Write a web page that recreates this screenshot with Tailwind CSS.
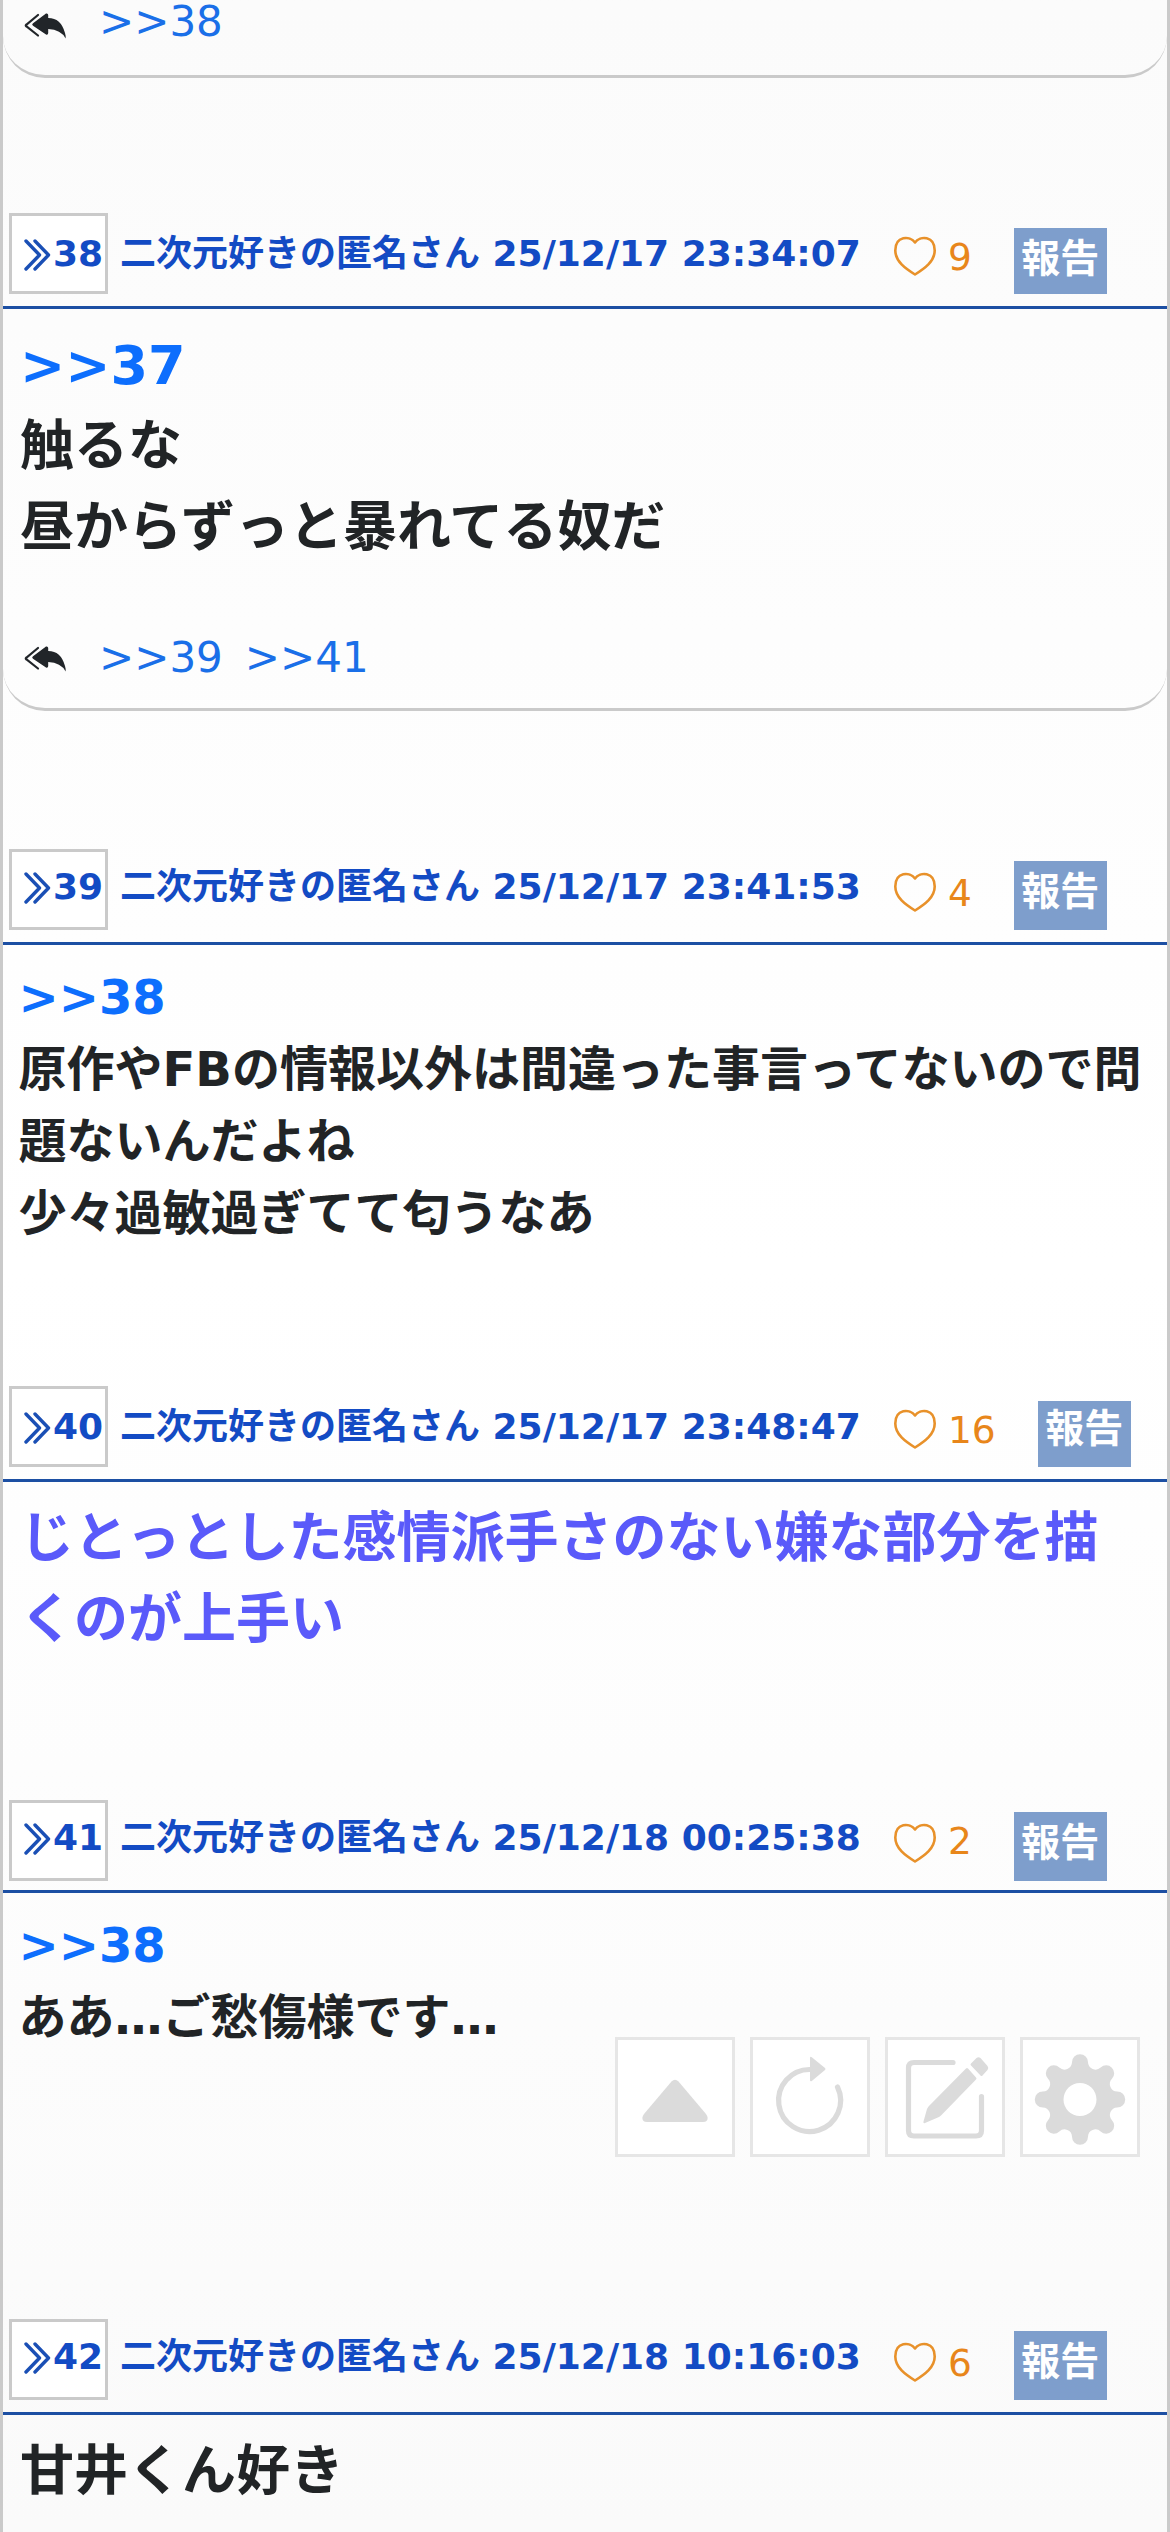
<!DOCTYPE html>
<html lang="ja">
<head>
<meta charset="utf-8">
<title>Thread</title>
<script src="https://cdn.jsdelivr.net/npm/@tailwindcss/browser@4"></script>
</head>
<body class="w-[1170px] h-[2532px] overflow-hidden relative font-['DejaVu_Sans','Noto_Sans_CJK_JP',sans-serif] text-[#212426]">
<svg class="hidden">
  <symbol id="replyall" viewBox="0 0 42 26"><path d="M14 2 2.5 11.5Q1 12.5 2.500 13.500L14 22.500" fill="none" stroke="#212529" stroke-width="2.2" stroke-linecap="round"/><path d="M9 10.200 22 .6Q24 0 24.200 2V5Q37 5 41 20Q42 23 41.600 25.500Q37 16.500 24.200 16V20Q24 22.200 22 21.500L9 12.800Q7.300 11.500 9 10.200Z" fill="#212529"/></symbol>
  <symbol id="chev" viewBox="0 0 27 32"><path d="M2 2 15.500 16 2 30M11 2 24.500 16 11 30" fill="none" stroke="#1a4fb5" stroke-width="3.400" stroke-linecap="round" stroke-linejoin="round"/></symbol>
  <symbol id="heart" viewBox="0 0 42 40"><path d="M21 6.500C16-.5 1.300-.5 1.300 14.500C1.300 25.500 11.500 32.500 21 38.500C30.500 32.500 40.700 25.500 40.700 14.500C40.700-.5 26-.5 21 6.500Z" fill="none" stroke="#e8912a" stroke-width="2.600" stroke-linejoin="round"/></symbol>
</svg>
<main class="h-full flex flex-col border-x-3 border-[#cacaca] bg-linear-to-b from-[#fbfbfb] via-white to-[#fafafa]">
  <div class="h-[78px] shrink-0 border-b-3 border-[#cacaca] rounded-b-[42px] flex items-start pl-[21px] text-[42px] leading-[63px] text-[#1a6fe8]">
    <svg class="w-[42px] h-[26px] mt-[13px]"><use href="#replyall"/></svg><span class="ml-[33px] -mt-[10px]">&gt;&gt;38</span>
  </div>

  <header class="h-[231px] shrink-0 border-b-3 border-[#1c4fa3] flex items-start pt-[135px] pl-[6px]">
    <div class="w-[99px] h-[81px] border-3 border-[#cacaca] bg-white flex pl-[12px] text-[#134bc4] font-bold text-[36px] leading-[54px]"><svg class="w-[27px] h-[32px] mt-[23px]"><use href="#chev"/></svg><span class="mt-[11px] ml-[2px]">38</span></div>
    <div class="ml-[12px] mt-[14px] w-[768px] whitespace-nowrap text-[#134bc4] font-bold text-[36px] leading-[54px]">二次元好きの匿名さん 25/12/17 23:34:07</div>
    <svg class="w-[42px] h-[40px] mt-[23px] ml-[6px]"><use href="#heart"/></svg>
    <span class="ml-[12px] mt-[17px] text-[#e8861a] text-[37.5px] leading-[54px]">9</span>
    <div class="ml-[42px] mt-[15px] w-[93px] h-[66px] bg-[#7e9ecc] text-white font-bold text-[39px] leading-[61px] text-center">報告</div>
  </header>
  <div class="h-[402px] shrink-0 border-b-3 border-[#cacaca] rounded-b-[42px] pt-[16px]">
    <div class="pl-[17px] font-bold text-[54px] leading-[81px] h-[315px]"><span class="text-[#0d6efd]">&gt;&gt;37</span><br>触るな<br>昼からずっと暴れてる奴だ</div>
    <div class="flex items-start pl-[21px] text-[42px] leading-[63px] text-[#1a6fe8]">
      <svg class="w-[42px] h-[26px] mt-[6px]"><use href="#replyall"/></svg><span class="ml-[33px] -mt-[14px]">&gt;&gt;39</span><span class="ml-[22px] -mt-[14px]">&gt;&gt;41</span>
    </div>
  </div>

  <header class="h-[234px] shrink-0 border-b-3 border-[#1c4fa3] flex items-start pt-[138px] pl-[6px]">
    <div class="w-[99px] h-[81px] border-3 border-[#cacaca] bg-white flex pl-[12px] text-[#134bc4] font-bold text-[36px] leading-[54px]"><svg class="w-[27px] h-[32px] mt-[20px]"><use href="#chev"/></svg><span class="mt-[8px] ml-[2px]">39</span></div>
    <div class="ml-[12px] mt-[11px] w-[768px] whitespace-nowrap text-[#134bc4] font-bold text-[36px] leading-[54px]">二次元好きの匿名さん 25/12/17 23:41:53</div>
    <svg class="w-[42px] h-[40px] mt-[23px] ml-[6px]"><use href="#heart"/></svg>
    <span class="ml-[12px] mt-[17px] text-[#e8861a] text-[37.5px] leading-[54px]">4</span>
    <div class="ml-[42px] mt-[12px] w-[93px] h-[69px] bg-[#7e9ecc] text-white font-bold text-[39px] leading-[61px] text-center">報告</div>
  </header>
  <div class="h-[303px] shrink-0 pt-[16px] pl-[15.5px] font-bold text-[48px] leading-[72px]"><span class="text-[#0d6efd]">&gt;&gt;38</span><br>原作やFBの情報以外は間違った事言ってないので問<br>題ないんだよね<br>少々過敏過ぎてて匂うなあ</div>

  <header class="h-[234px] shrink-0 border-b-3 border-[#1c4fa3] flex items-start pt-[138px] pl-[6px]">
    <div class="w-[99px] h-[81px] border-3 border-[#cacaca] bg-white flex pl-[12px] text-[#134bc4] font-bold text-[36px] leading-[54px]"><svg class="w-[27px] h-[32px] mt-[23px]"><use href="#chev"/></svg><span class="mt-[11px] ml-[2px]">40</span></div>
    <div class="ml-[12px] mt-[14px] w-[768px] whitespace-nowrap text-[#134bc4] font-bold text-[36px] leading-[54px]">二次元好きの匿名さん 25/12/17 23:48:47</div>
    <svg class="w-[42px] h-[40px] mt-[23px] ml-[6px]"><use href="#heart"/></svg>
    <span class="ml-[12px] mt-[17px] text-[#e8861a] text-[37.5px] leading-[54px]">16</span>
    <div class="ml-[42px] mt-[15px] w-[93px] h-[66px] bg-[#7e9ecc] text-white font-bold text-[39px] leading-[56px] text-center">報告</div>
  </header>
  <div class="h-[180px] shrink-0 pt-[16px] pl-[17px] font-bold text-[54px] leading-[81px] text-[#5a5afa]">じとっとした感情派手さのない嫌な部分を描<br>くのが上手い</div>

  <header class="h-[231px] shrink-0 border-b-3 border-[#1c4fa3] flex items-start pt-[138px] pl-[6px]">
    <div class="w-[99px] h-[81px] border-3 border-[#cacaca] bg-white flex pl-[12px] text-[#134bc4] font-bold text-[36px] leading-[54px]"><svg class="w-[27px] h-[32px] mt-[20px]"><use href="#chev"/></svg><span class="mt-[8px] ml-[2px]">41</span></div>
    <div class="ml-[12px] mt-[11px] w-[768px] whitespace-nowrap text-[#134bc4] font-bold text-[36px] leading-[54px]">二次元好きの匿名さん 25/12/18 00:25:38</div>
    <svg class="w-[42px] h-[40px] mt-[23px] ml-[6px]"><use href="#heart"/></svg>
    <span class="ml-[12px] mt-[14px] text-[#e8861a] text-[37.5px] leading-[54px]">2</span>
    <div class="ml-[42px] mt-[12px] w-[93px] h-[69px] bg-[#7e9ecc] text-white font-bold text-[39px] leading-[61px] text-center">報告</div>
  </header>
  <div class="h-[288px] shrink-0 pt-[16px] pl-[15.5px] font-bold text-[48px] leading-[72px]"><span class="text-[#0d6efd]">&gt;&gt;38</span><br>ああ…ご愁傷様です…</div>

  <header class="h-[234px] shrink-0 border-b-3 border-[#1c4fa3] flex items-start pt-[138px] pl-[6px]">
    <div class="w-[99px] h-[81px] border-3 border-[#cacaca] bg-white flex pl-[12px] text-[#134bc4] font-bold text-[36px] leading-[54px]"><svg class="w-[27px] h-[32px] mt-[20px]"><use href="#chev"/></svg><span class="mt-[8px] ml-[2px]">42</span></div>
    <div class="ml-[12px] mt-[11px] w-[768px] whitespace-nowrap text-[#134bc4] font-bold text-[36px] leading-[54px]">二次元好きの匿名さん 25/12/18 10:16:03</div>
    <svg class="w-[42px] h-[40px] mt-[23px] ml-[6px]"><use href="#heart"/></svg>
    <span class="ml-[12px] mt-[17px] text-[#e8861a] text-[37.5px] leading-[54px]">6</span>
    <div class="ml-[42px] mt-[12px] w-[93px] h-[69px] bg-[#7e9ecc] text-white font-bold text-[39px] leading-[61px] text-center">報告</div>
  </header>
  <div class="shrink-0 pt-[16px] pl-[17px] font-bold text-[54px] leading-[81px]">甘井くん好き</div>
</main>

<!-- floating tools; icon coordinates are the button's own 114px interior -->
<nav class="absolute left-[615px] top-[2037px] flex gap-[15px]">
  <div class="size-[120px] border-3 border-[#e6e6e6] bg-white"><svg class="size-[114px]" viewBox="0 0 114 114" fill="#dbdbdb"><path d="M53.500 41.500Q57 38 60.500 41.500L88 74Q91 78 88.500 81Q87.500 82 85 82H29Q26.500 82 25.500 81Q23 78 26 74Z"/></svg></div>
  <div class="size-[120px] border-3 border-[#e6e6e6] bg-white"><svg class="size-[114px]" viewBox="0 0 114 114" fill="#dbdbdb"><path d="M84.500 47A31 31 0 1 1 57 29.500" fill="none" stroke="#dbdbdb" stroke-width="5.200" stroke-linecap="round"/><path d="M57 18Q57 16 58.800 17.300L72 28Q73 29 72 30L58.800 41Q57 42 57 40Z"/></svg></div>
  <div class="size-[120px] border-3 border-[#e6e6e6] bg-white"><svg class="size-[114px]" viewBox="0 0 114 114" fill="#dbdbdb"><path d="M65 22.500H26Q20.500 22.500 20.500 28V90.500Q20.500 96 26 96H88Q93.500 96 93.500 90.500V56.500" fill="none" stroke="#dbdbdb" stroke-width="5.200" stroke-linecap="round"/><path d="M78 28.500Q79 27.500 80 28.500L88 37.500Q89 38.500 88 39.500L53 75.500L51 77L37 83Q35 84 35.500 81.500L39 69L40.500 66.500Z"/><path d="M83 23.500 88.500 18Q90.500 16.500 92.500 18L99.500 26Q101 28 99.500 30L94.500 35.500Q93.500 36.500 92.500 35.500L83 25.500Q82 24.500 83 23.500Z"/></svg></div>
  <div class="size-[120px] border-3 border-[#e6e6e6] bg-white"><svg class="size-[114px]" viewBox="0 0 114 114"><path transform="translate(57 59.500)" fill="#dbdbdb" fill-rule="evenodd" d="M37.220-8A8 8 0 0 1 37.220 8A7.500 7.500 0 0 0 31.970 20.660A8 8 0 0 1 20.660 31.970A7.500 7.500 0 0 0 8 37.220A8 8 0 0 1-8 37.220A7.500 7.500 0 0 0-20.660 31.970A8 8 0 0 1-31.970 20.660A7.500 7.500 0 0 0-37.220 8A8 8 0 0 1-37.220-8A7.500 7.500 0 0 0-31.970-20.660A8 8 0 0 1-20.660-31.970A7.500 7.500 0 0 0-8-37.220A8 8 0 0 1 8-37.220A7.500 7.500 0 0 0 20.660-31.970A8 8 0 0 1 31.970-20.660A7.500 7.500 0 0 0 37.220-8ZM16.500 0A16.500 16.500 0 1 0-16.500 0A16.500 16.500 0 1 0 16.500 0Z"/></svg></div>
</nav>
</body>
</html>
